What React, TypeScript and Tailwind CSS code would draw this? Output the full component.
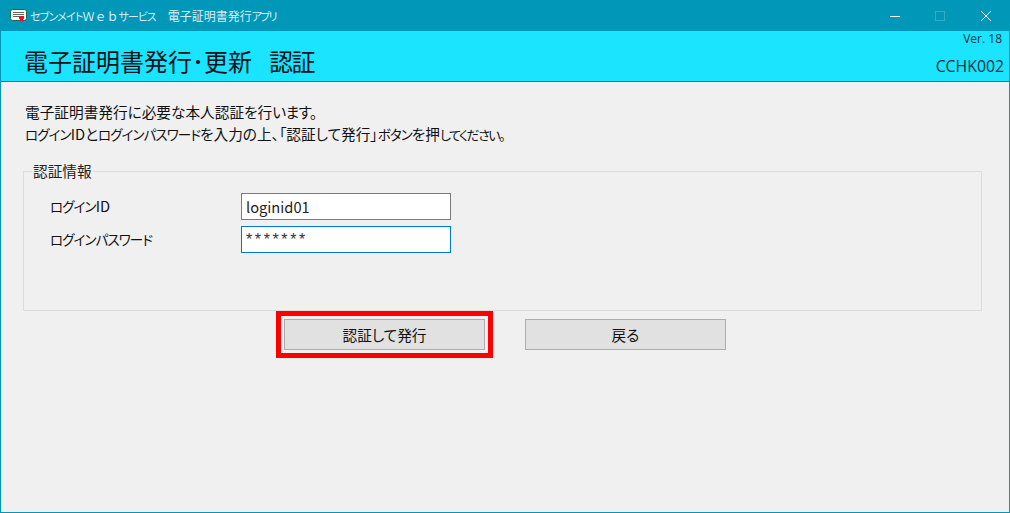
const jp = '"Noto Sans CJK JP", "Liberation Sans", sans-serif';
const latin = '"Open Sans", sans-serif';

function CertIcon() {
  return (
    <svg width="17" height="14" viewBox="0 0 17 14" className="mr-[3px]">
      <rect x="0.500" y="0.500" width="16" height="11" rx="2" fill="#fff" stroke="#1c6b42" />
      <path d="M3 3.500h11M3 5.500h11M3 7.500h6" stroke="#5a6a62" strokeWidth="1" />
      <path d="M9 7h5v2.500l-1 1V13l-1.500-1.200L10 13v-2.500l-1-1z" fill="#e8112d" />
    </svg>
  );
}

function Kana({ children }: { children: React.ReactNode }) {
  return <span className="text-[13.500px] tracking-[-0.900px]">{children}</span>;
}

function Field({ label, value, focused }: { label: React.ReactNode; value: string; focused?: boolean }) {
  return (
    <div className="flex items-center">
      <div className="w-[191px] pb-[2px] text-[14.67px] leading-[20px] text-[#111]">{label}</div>
      <div
        className={
          'w-[210px] h-[27px] bg-white border flex items-center px-[4px] ' +
          (focused
            ? 'border-[#0078d7] font-[Liberation_Sans] text-[16px] tracking-[2.6px] pt-[1px] text-[#333]'
            : 'border-[#7a7a7a] text-[14.67px] text-[#222]')
        }
      >
        {value}
      </div>
    </div>
  );
}

export default function App() {
  return (
    <div
      className="w-[1010px] h-[513px] flex flex-col bg-[#f0f0f0] border border-[#0097b8] border-t-0 overflow-hidden [font-feature-settings:'palt']"
      style={{ fontFamily: jp }}
    >
      <div className="h-[31px] shrink-0 bg-[#0097b8] flex items-center pl-[9px] text-white">
        <CertIcon />
        <span className="text-[12px] text-[#d8eff5] whitespace-pre">
          <span className="text-[11px] tracking-[-0.800px]">セブンメイト</span>
          <span className="[font-feature-settings:normal]">Ｗｅｂ</span>
          <span className="text-[11px] tracking-[-1px]">サービス</span>
          <span className="[font-feature-settings:normal]">　</span>
          電子証明書発行<span className="text-[11px] tracking-[-1.800px]">アプリ</span>
        </span>
        <div className="ml-auto flex items-center">
          <svg width="10" height="10" viewBox="0 0 10 10" className="mr-[35px]">
            <path d="M0 5.500h10" stroke="#fff" />
          </svg>
          <svg width="10" height="10" viewBox="0 0 10 10" className="mr-[36px]">
            <rect x="0.500" y="0.500" width="9" height="9" fill="none" stroke="#35abc6" />
          </svg>
          <svg width="10" height="10" viewBox="0 0 10 10" className="mr-[18px]">
            <path d="M0 0l10 10M10 0L0 10" stroke="#fff" />
          </svg>
        </div>
      </div>

      <div className="h-[51px] shrink-0 bg-[#1ae4ff] border-b border-[#4a6b73] flex justify-between pl-[23px] pr-[5px]">
        <div className="self-end pb-[4px] text-[24px] leading-[32px] text-[#06121a] whitespace-pre">
          電子証明書発行･更新<span className="inline-block w-[17px]" /><span className="tracking-[-1.500px]">認証</span>
        </div>
        <div className="flex flex-col items-end text-[#14303a]">
          <div className="text-[12px] leading-[16px] mr-[2px]" style={{ fontFamily: latin }}>Ver. 18</div>
          <div className="text-[15.800px] leading-[20px] mt-[9px]" style={{ fontFamily: latin }}>CCHK002</div>
        </div>
      </div>

      <div className="flex-1 px-[22px] pt-[19px]">
        <div className="pl-[2px] text-[14.67px] leading-[22px] text-[#111]">
          <p>電子証明書発行に必要な本人認証を行<span className="tracking-[-0.500px]">います。</span></p>
          <p>
            <Kana>ログイン</Kana>IDと<Kana>ログインパスワード</Kana>を入力の上、「認証して発行」<Kana>ボタン</Kana>を押<span className="text-[13px] tracking-[-1.500px]">してください。</span>
          </p>
        </div>

        <div className="relative mt-[25px] w-[959px] h-[140px] border border-[#dcdcdc] pl-[26px] pt-[21px]">
          <span className="absolute left-[8px] top-[-11px] bg-[#f0f0f0] px-[1px] text-[14.67px] leading-[20px] text-[#222]">認証情報</span>
          <div className="flex flex-col gap-[6px]">
            <Field label={<><Kana>ログイン</Kana>ID</>} value="loginid01" />
            <Field label={<Kana>ログインパスワード</Kana>} value="*******" focused />
          </div>
        </div>

        <div className="flex items-center">
          <div className="ml-[253px] border-[5px] border-[#ff0000] p-[3px]">
            <div className="w-[201px] h-[31px] bg-[#e1e1e1] border border-[#adadad] flex items-center justify-center text-[14.67px] text-[#111]">認証して発行</div>
          </div>
          <div className="ml-[32px] w-[201px] h-[31px] bg-[#e1e1e1] border border-[#adadad] flex items-center justify-center text-[14.67px] text-[#111]">戻る</div>
        </div>
      </div>
    </div>
  );
}
